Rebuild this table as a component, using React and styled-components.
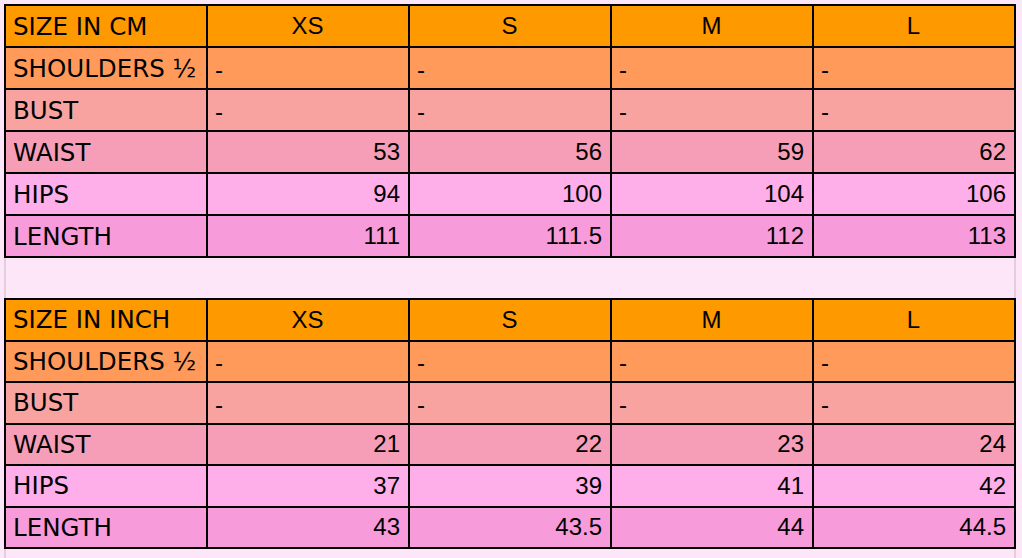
import React from "react";
import styled, { createGlobalStyle } from "styled-components";

const GlobalStyle = createGlobalStyle`
  html, body {
    margin: 0;
    padding: 0;
    background: #fde6f7;
  }
`;

const rowColors = {
  head: "#ff9900",
  shoulders: "#ff9a5b",
  bust: "#f8a3a0",
  waist: "#f69db8",
  hips: "#feaee8",
  length: "#f89bdb",
};

const Page = styled.div`
  padding: 4px 0 0 4px;
  min-height: 554px;
  box-sizing: border-box;
`;

const Sheet = styled.div`
  width: 1012px;
  min-height: 554px;
  display: flex;
  flex-direction: column;
  gap: 40px;
  box-shadow: inset 2px 0 #e4cedd, inset -2px 0 #e4cedd;
`;

const Grid = styled.div`
  display: grid;
  grid-template-columns: repeat(5, 1fr);
  gap: 2px;
  padding: 2px;
  background: #000;
`;

const Cell = styled.div`
  height: ${(p) => p.$h || 40}px;
  display: flex;
  align-items: center;
  justify-content: ${(p) =>
    p.$align === "right" ? "flex-end" : p.$align === "center" ? "center" : "flex-start"};
  padding: 0 8px 0 7px;
  background: ${(p) => rowColors[p.$row]};
  font-family: "Liberation Sans", Arial, sans-serif;
  font-size: 24px;
  color: #000;
  white-space: nowrap;
  overflow: hidden;
`;

const Label = styled(Cell)`
  font-family: "DejaVu Sans", "Lucida Grande", sans-serif;
  font-size: 24.5px;
`;

const Dash = styled.span`
  position: relative;
  top: 2px;
`;

const sizes = ["XS", "S", "M", "L"];

const tables = [
  {
    title: "SIZE IN CM",
    h: 40,
    waist: ["53", "56", "59", "62"],
    hips: ["94", "100", "104", "106"],
    length: ["111", "111.5", "112", "113"],
  },
  {
    title: "SIZE IN INCH",
    h: 39.5,
    waist: ["21", "22", "23", "24"],
    hips: ["37", "39", "41", "42"],
    length: ["43", "43.5", "44", "44.5"],
  },
];

const SizeTable = ({ data }) => (
  <Grid>
    <Label $row="head" $h={data.h}>{data.title}</Label>
    {sizes.map((s) => (
      <Cell key={s} $row="head" $h={data.h} $align="center">
        {s}
      </Cell>
    ))}

    <Label $row="shoulders" $h={data.h}>SHOULDERS ½</Label>
    {sizes.map((s) => (
      <Cell key={s} $row="shoulders" $h={data.h}>
        <Dash>-</Dash>
      </Cell>
    ))}

    <Label $row="bust" $h={data.h}>BUST</Label>
    {sizes.map((s) => (
      <Cell key={s} $row="bust" $h={data.h}>
        <Dash>-</Dash>
      </Cell>
    ))}

    {["waist", "hips", "length"].map((row) => (
      <React.Fragment key={row}>
        <Label $row={row} $h={data.h}>{row.toUpperCase()}</Label>
        {data[row].map((v, i) => (
          <Cell key={i} $row={row} $h={data.h} $align="right">
            {v}
          </Cell>
        ))}
      </React.Fragment>
    ))}
  </Grid>
);

const App = () => (
  <>
    <GlobalStyle />
    <Page>
      <Sheet>
        {tables.map((t) => (
          <SizeTable key={t.title} data={t} />
        ))}
      </Sheet>
    </Page>
  </>
);

export default App;
